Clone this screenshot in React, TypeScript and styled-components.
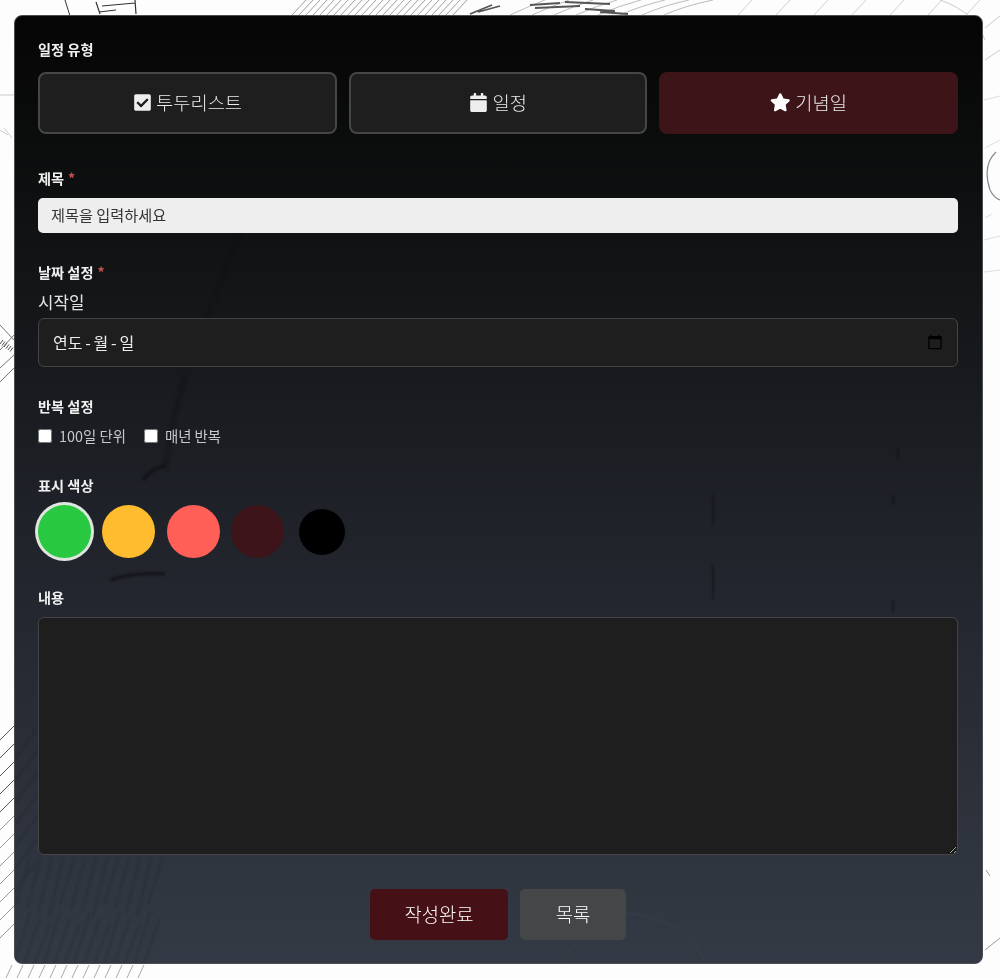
import React from "react";
import styled, { createGlobalStyle } from "styled-components";
import { FaCheckSquare, FaCalendar, FaStar } from "react-icons/fa";

const Global = createGlobalStyle`
  html, body { margin: 0; padding: 0; background: #fdfdfd; }
  * { box-sizing: border-box; }
  body { font-family: "Noto Sans CJK KR", "Noto Sans", sans-serif; color: #f2f2f2; }
`;

const Page = styled.div`
  position: relative;
  width: 1000px;
  height: 978px;
  overflow: hidden;
  padding: 15px 17px 14px 14px;
`;

const Backdrop = styled.svg`
  position: absolute;
  inset: 0;
  width: 1000px;
  height: 978px;
  filter: blur(0.7px);
`;

const Ghost = styled.svg`
  position: absolute;
  inset: -1px;
  width: 969px;
  height: 949px;
  filter: blur(0.8px);
`;

const Card = styled.main`
  position: relative;
  height: 949px;
  padding: 23px 24px 23px 23px;
  border: 1px solid #4a4d52;
  border-radius: 8px;
  overflow: hidden;
  background: linear-gradient(180deg, #050505 0%, #111314 25%, #20232a 55%, #343a45 100%);
`;

const Form = styled.form`
  position: relative;
  display: flex;
  flex-direction: column;
  gap: 29px;
`;

const Group = styled.section``;

const Label = styled.div<{ $flush?: boolean }>`
  height: 21px;
  margin-bottom: ${(p) => (p.$flush ? 0 : 9)}px;
  font-size: 14.2px;
  line-height: 21px;
  font-weight: 700;
  color: #f0f0f0;
`;

const Required = styled.span`
  margin-left: 4px;
  color: #c9504c;
`;

const TypeRow = styled.div`
  display: grid;
  grid-template-columns: repeat(3, 1fr);
  gap: 12px;
  margin: 12px 0 5px;
`;

const TypeButton = styled.button<{ $active?: boolean }>`
  display: flex;
  align-items: center;
  justify-content: center;
  gap: 4.5px;
  height: 62px;
  padding: 0 0 2px;
  border: 2px solid ${(p) => (p.$active ? "#3d1519" : "#464646")};
  border-radius: 8px;
  background: ${(p) => (p.$active ? "#3d1519" : "#1e1e1e")};
  color: #ececec;
  font-family: inherit;
  font-size: 18.7px;
  font-weight: 300;
  line-height: 1;
  svg { display: block; flex: none; color: ${(p) => (p.$active ? "#fff" : "#eee")}; }
`;

const TitleInput = styled.input`
  display: block;
  width: 100%;
  height: 35px;
  padding: 0 13px 4px;
  border: 0;
  border-radius: 5px;
  background: #eeeeee;
  font-family: inherit;
  font-size: 15.2px;
  &::placeholder { color: #333; opacity: 1; }
`;

const SubLabel = styled.div`
  margin: -2px 0 4px;
  font-size: 16.8px;
  line-height: 24px;
  color: #e2e2e2;
`;

const DateField = styled.div`
  display: flex;
  align-items: center;
  justify-content: space-between;
  height: 49px;
  padding: 0 14px 2px;
  border: 1px solid #444;
  border-radius: 6px;
  background: #1e1e1e;
  font-size: 16px;
  word-spacing: -0.8px;
  color: #eee;
`;

const DateIcon = styled.svg`
  width: 16px;
  height: 16px;
  fill: #000;
`;

const CheckRow = styled.div`
  display: flex;
  gap: 18px;
  margin-top: -1px;
`;

const CheckLabel = styled.label`
  display: flex;
  align-items: center;
  gap: 7px;
  height: 21px;
  font-size: 14.4px;
  color: #c8c8c8;
`;

const CheckBox = styled.input`
  width: 14px;
  height: 14px;
  margin: 1px 0 0;
`;

const Swatches = styled.div`
  display: flex;
  gap: 11.4px;
`;

const Slot = styled.div`
  display: flex;
  align-items: center;
  justify-content: center;
  width: 53px;
  height: 53px;
`;

const Dot = styled.div<{ $color: string; $size: number; $selected?: boolean }>`
  width: ${(p) => p.$size}px;
  height: ${(p) => p.$size}px;
  border-radius: 50%;
  background: ${(p) => p.$color};
  box-shadow: ${(p) => (p.$selected ? "0 0 0 3px #dfe6df" : "none")};
`;

const Content = styled.textarea`
  display: block;
  width: 100%;
  height: 238px;
  border: 1px solid #444;
  border-radius: 6px;
  background: #1e1e1e;
  color: #eee;
`;

const Actions = styled.div`
  display: flex;
  justify-content: center;
  gap: 12px;
  margin-top: 5px;
`;

const ActionButton = styled.button<{ $primary?: boolean }>`
  height: 51px;
  width: ${(p) => (p.$primary ? 138 : 106)}px;
  padding: 0 0 3px;
  border: 0;
  border-radius: 5px;
  background: ${(p) => (p.$primary ? "#451016" : "#444648")};
  color: #ffffff;
  font-family: inherit;
  font-size: 18.8px;
  font-weight: 300;
`;

const range = (n: number) => Array.from({ length: n }, (_, i) => i);

function Sketch() {
  return (
    <Backdrop viewBox="0 0 1000 978" aria-hidden>
      <g fill="none" stroke="#333" strokeWidth="1">
        <path d="M65 0 L70 16" />
        <path d="M96 2 L100 14 M102 6 L135 3 M99 12 L116 10 M135 0 L136 14" strokeWidth="1.2" />
      </g>
      <g fill="none" stroke="#888" strokeWidth="0.8">
        {range(24).map((i) => (
          <path key={i} d={`M${292 + i * 7} 15 L${306 + i * 7} 0`} />
        ))}
        {range(8).map((i) => (
          <path key={i} d={`M${510 + i * 22} 15 Q${530 + i * 22} 6 ${545 + i * 24} 0`} stroke="#aaa" />
        ))}
        {range(7).map((i) => (
          <path key={i} d={`M${738 + i * 38} 15 L${752 + i * 38} 0`} stroke="#c4c4c4" />
        ))}
      </g>
      <path
        d="M470 14 L492 5 M478 12 L500 6 M530 5 L560 3 M535 8 L580 6 M565 2 L610 4 M600 12 L628 14 M585 9 L615 11"
        fill="none"
        stroke="#555"
        strokeWidth="1.8"
      />
      <path d="M940 0 Q975 12 985 40 M985 28 L1000 16 M985 60 L1000 50" fill="none" stroke="#ccc" />
      <path d="M996 152 Q982 165 990 190 Q994 198 1000 200" fill="none" stroke="#888" strokeWidth="1.2" />
      <path d="M984 100 L1000 96 M984 240 L1000 236 M984 272 L1000 270 M985 218 L992 214 M985 148 L1000 140" fill="none" stroke="#ddd" />
      <path d="M985 950 L1000 938 M986 870 L990 876" fill="none" stroke="#999" />
      <g fill="none" stroke="#999" strokeWidth="1">
        <path d="M0 95 L14 95" stroke="#e4e4e4" strokeWidth="2" />
        <path d="M0 130 L8 135 M4 128 L12 138" stroke="#ccc" />
        <path d="M0 325 L14 340 M0 350 L14 335 M0 368 L14 355 M0 382 L14 368" stroke="#777" />
        {range(6).map((i) => (
          <path key={i} d={`M${i * 2} ${344 + i * 1.5} L${i * 2 + 3} ${340 + i * 1.5}`} stroke="#555" />
        ))}
      </g>
      <g fill="none" strokeWidth="1">
        {range(12).map((i) => (
          <path key={i} d={`M0 ${740 + i * 18} L14 ${726 + i * 18}`} stroke={i < 5 ? "#555" : "#999"} />
        ))}
        {range(13).map((i) => (
          <path key={i} d={`M${6 + i * 11} 978 L${12 + i * 11} 965`} stroke="#aaa" />
        ))}
      </g>
    </Backdrop>
  );
}

function GhostMarks() {
  return (
    <Ghost viewBox="14 15 969 949" aria-hidden>
      <g fill="none" stroke="#1a1e27" strokeWidth="0.8" opacity="0.6">
        {range(14).map((i) => (
          <path key={i} d={`M${14 + i * 10} 964 L${30 + i * 10} ${912 + (i % 3) * 6}`} />
        ))}
        {range(13).map((i) => (
          <path key={i} d={`M${16 + i * 11} ${905 + (i % 4) * 4} L${30 + i * 11} 858`} />
        ))}
        {range(7).map((i) => (
          <path key={i} d={`M14 ${760 + i * 22} L38 ${728 + i * 22}`} />
        ))}
      </g>
      <g fill="none" stroke="#0b0b0e" strokeWidth="1.5" opacity="0.6">
        <path d="M713 495 V525 M713 565 V600 M893 495 V505 M893 600 V612 M898 448 V458" />
        <path d="M143 480 Q150 470 165 465 M110 580 Q135 572 165 574" strokeWidth="3" />
        <path d="M185 375 Q172 420 165 470" strokeWidth="6" opacity="0.3" />
        <path d="M240 235 Q215 290 200 340" strokeWidth="5" opacity="0.2" />
      </g>
      <path d="M560 964 Q600 900 650 918 Q690 925 705 964" fill="none" stroke="#444a56" strokeWidth="0.5" />
    </Ghost>
  );
}

export default function App() {
  return (
    <>
      <Global />
      <Page>
        <Sketch />
        <Card>
          <GhostMarks />
          <Form>
            <Group>
              <Label $flush>일정 유형</Label>
              <TypeRow>
                <TypeButton type="button"><FaCheckSquare size={19} />투두리스트</TypeButton>
                <TypeButton type="button"><FaCalendar size={19} />일정</TypeButton>
                <TypeButton type="button" $active><FaStar size={20.5} />기념일</TypeButton>
              </TypeRow>
            </Group>
            <Group>
              <Label>제목<Required>*</Required></Label>
              <TitleInput placeholder="제목을 입력하세요" />
            </Group>
            <Group>
              <Label>날짜 설정<Required>*</Required></Label>
              <SubLabel>시작일</SubLabel>
              <DateField>
                <span>연도 - 월 - 일</span>
                <DateIcon viewBox="0 0 24 24">
                  <path d="M20 3h-1V1h-2v2H7V1H5v2H4c-1.1 0-2 .9-2 2v16c0 1.1.9 2 2 2h16c1.1 0 2-.9 2-2V5c0-1.1-.9-2-2-2zm0 18H4V8h16v13z" />
                </DateIcon>
              </DateField>
            </Group>
            <Group>
              <Label>반복 설정</Label>
              <CheckRow>
                <CheckLabel><CheckBox type="checkbox" />100일 단위</CheckLabel>
                <CheckLabel><CheckBox type="checkbox" />매년 반복</CheckLabel>
              </CheckRow>
            </Group>
            <Group>
              <Label>표시 색상</Label>
              <Swatches>
                <Slot><Dot $color="#28c840" $size={53} $selected /></Slot>
                <Slot><Dot $color="#febc2e" $size={53} /></Slot>
                <Slot><Dot $color="#ff5f57" $size={53} /></Slot>
                <Slot><Dot $color="#3d1419" $size={53} /></Slot>
                <Slot><Dot $color="#000000" $size={46} /></Slot>
              </Swatches>
            </Group>
            <Group>
              <Label>내용</Label>
              <Content />
            </Group>
            <Actions>
              <ActionButton type="button" $primary>작성완료</ActionButton>
              <ActionButton type="button">목록</ActionButton>
            </Actions>
          </Form>
        </Card>
      </Page>
    </>
  );
}
